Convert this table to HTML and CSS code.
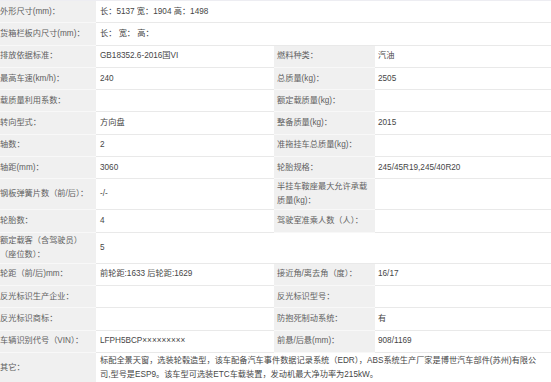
FILE: index.html
```html
<!DOCTYPE html>
<html lang="zh-CN">
<head>
<meta charset="utf-8">
<title>参数</title>
<link rel="stylesheet" href="styles.css">
</head>
<body>
<div class="spec">
  <div class="lab first">外形尺寸(mm)：</div><div class="val span3 first">长：5137 宽：1904 高：1498</div>
  <div class="lab">货箱栏板内尺寸(mm)：</div><div class="val span3">长： 宽： 高：</div>
  <div class="lab">排放依据标准：</div><div class="val">GB18352.6-2016国VI</div><div class="lab lab2">燃料种类：</div><div class="val val2">汽油</div>
  <div class="lab">最高车速(km/h)：</div><div class="val">240</div><div class="lab lab2">总质量(kg)：</div><div class="val val2">2505</div>
  <div class="lab">载质量利用系数：</div><div class="val"></div><div class="lab lab2">额定载质量(kg)：</div><div class="val val2"></div>
  <div class="lab">转向型式：</div><div class="val">方向盘</div><div class="lab lab2">整备质量(kg)：</div><div class="val val2">2015</div>
  <div class="lab">轴数：</div><div class="val">2</div><div class="lab lab2">准拖挂车总质量(kg)：</div><div class="val val2"></div>
  <div class="lab">轴距(mm)：</div><div class="val">3060</div><div class="lab lab2">轮胎规格：</div><div class="val val2">245/45R19,245/40R20</div>
  <div class="lab">钢板弹簧片数（前/后）：</div><div class="val">-/-</div><div class="lab lab2">半挂车鞍座最大允许承载质量(kg)：</div><div class="val val2"></div>
  <div class="lab">轮胎数：</div><div class="val">4</div><div class="lab lab2">驾驶室准乘人数（人）：</div><div class="val val2"></div>
  <div class="lab">额定载客（含驾驶员）（座位数）：</div><div class="val span3">5</div>
  <div class="lab">轮距（前/后)mm：</div><div class="val">前轮距:1633 后轮距:1629</div><div class="lab lab2">接近角/离去角（度）：</div><div class="val val2">16/17</div>
  <div class="lab">反光标识生产企业：</div><div class="val"></div><div class="lab lab2">反光标识型号：</div><div class="val val2"></div>
  <div class="lab">反光标识商标：</div><div class="val"></div><div class="lab lab2">防抱死制动系统：</div><div class="val val2">有</div>
  <div class="lab">车辆识别代号（VIN）：</div><div class="val">LFPH5BCP×××××××××</div><div class="lab lab2">前悬/后悬(mm)：</div><div class="val val2">908/1169</div>
  <div class="lab">其它：</div><div class="val span3 other">标配全景天窗，选装轮毂造型，该车配备汽车事件数据记录系统（EDR），ABS系统生产厂家是博世汽车部件(苏州)有限公司,型号是ESP9。该车型可选装ETC车载装置，发动机最大净功率为215kW。</div>
</div>
</body>
</html>
```
FILE: styles.css
```css
html, body {
  margin: 0;
  padding: 0;
  background: #ffffff;
  overflow: hidden;
}

.spec {
  display: grid;
  grid-template-columns: 99px 178px 101px 176px;
  grid-auto-rows: minmax(22.3px, auto);
  width: 554px;
  margin-left: -3px;
  border-top: 1px solid #ededf2;
  font-family: "Liberation Sans", Arial, "Noto Sans CJK SC", sans-serif;
  font-size: 8.2px;
  line-height: 14px;
}

.spec > div {
  box-sizing: border-box;
  display: flex;
  align-items: center;
  padding: 1px 3px;
  border-bottom: 1px solid #e9e9e9;
}

.spec > .first {
  min-height: 21px;
}

.lab {
  background: #f0f0f0;
  color: #606060;
  border-bottom-color: #f8f8f8 !important;
}

.lab2 {
  padding-left: 3px;
}

.val {
  color: #464646;
  padding-left: 4px !important;
}

.val2 {
  padding-left: 3px !important;
}

.span3 {
  grid-column: span 3;
}

.other {
  padding-right: 9px !important;
}
```
